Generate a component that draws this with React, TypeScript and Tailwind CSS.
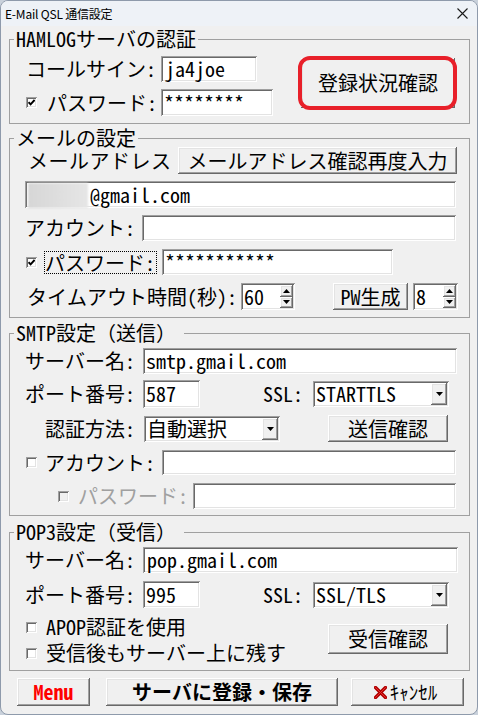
import React from "react";

const RAISED =
  "bg-[#f0f0f0] shadow-[inset_-1px_-1px_0_#696969,inset_1px_1px_0_#ffffff,inset_-2px_-2px_0_#a0a0a0,inset_2px_2px_0_#e3e3e3]";
const SUNKEN =
  "bg-white shadow-[inset_1px_1px_0_#a0a0a0,inset_-1px_-1px_0_#ffffff,inset_2px_2px_0_#696969,inset_-2px_-2px_0_#e3e3e3]";

type Props = { className?: string; children?: React.ReactNode };

function Btn({ className = "", children }: Props) {
  return (
    <button type="button" className={`${RAISED} flex items-center justify-center shrink-0 whitespace-nowrap ${className}`}>
      {children}
    </button>
  );
}

function Field({ className = "", children }: Props) {
  return (
    <div className={`${SUNKEN} flex items-center pl-[3px] shrink-0 whitespace-nowrap ${className}`}>
      {children}
    </div>
  );
}

function Tri({ up = false }: { up?: boolean }) {
  return (
    <svg width="7" height="4" viewBox="0 0 7 4">
      <path d={up ? "M0 4 L3.5 0 L7 4 Z" : "M0 0 L7 0 L3.5 4 Z"} fill="#000" />
    </svg>
  );
}

function Select({ className = "", value }: { className?: string; value: string }) {
  return (
    <Field className={`justify-between pr-[2px] ${className}`}>
      <span>{value}</span>
      <span className={`${RAISED} w-[16px] h-[22px] flex items-center justify-center`}>
        <Tri />
      </span>
    </Field>
  );
}

function Spin({ className = "", value }: { className?: string; value: string }) {
  return (
    <Field className={`justify-between pr-[2px] ${className}`}>
      <span>{value}</span>
      <span className="flex flex-col w-[13px] h-[23px]">
        <span className={`${RAISED} flex-1 flex items-center justify-center`}>
          <Tri up />
        </span>
        <span className={`${RAISED} flex-1 flex items-center justify-center`}>
          <Tri />
        </span>
      </span>
    </Field>
  );
}

function Check({ checked = false, disabled = false, className = "" }: { checked?: boolean; disabled?: boolean; className?: string }) {
  return (
    <span
      className={`w-[11px] h-[11px] shrink-0 flex items-center justify-center ${
        disabled ? "bg-[#f0f0f0]" : "bg-white"
      } shadow-[inset_1px_1px_0_#a0a0a0,inset_-1px_-1px_0_#ffffff,inset_2px_2px_0_#696969,inset_-2px_-2px_0_#e3e3e3] ${className}`}
    >
      {checked && (
        <svg width="7" height="7" viewBox="0 0 7 7">
          <path d="M0.5 3.2 L2.6 5.4 L6.6 1" stroke="#000" strokeWidth="2" fill="none" />
        </svg>
      )}
    </span>
  );
}

function Group({ title, className = "", legendClass = "", children }: Props & { title: string; legendClass?: string }) {
  return (
    <fieldset className={`border border-[#a0a0a0] ${className}`}>
      <legend className={`ml-[4px] px-[2px] h-[18px] leading-[18px] ${legendClass}`}>{title}</legend>
      {children}
    </fieldset>
  );
}

export default function App() {
  return (
    <div className="w-[478px] h-[715px] bg-[#c9d1db]">
      <div className="w-[478px] h-[715px] bg-[#f0f0f0] rounded-[8px] border border-[#8e9aab] overflow-hidden text-black text-[20px] leading-[20px] font-['Noto_Sans_Mono_CJK_JP','Noto_Sans_CJK_JP',monospace]">
        {/* title bar */}
        <div className="h-[25px] bg-[#eef2f7] flex items-center justify-between pl-[4px] pr-[9px]">
          <span className="text-[12px] leading-[14px] font-['Noto_Sans_CJK_JP',sans-serif] tracking-[-0.2px]">
            E-Mail QSL 通信設定
          </span>
          <svg width="11" height="11" viewBox="0 0 11 11">
            <path d="M0.5 0.5 L10.5 10.5 M10.5 0.5 L0.5 10.5" stroke="#1a1a1a" strokeWidth="1.1" />
          </svg>
        </div>

        <div className="pl-[8px] pr-[7px]">
          {/* HAMLOG */}
          <Group title="HAMLOGサーバの認証" className="mt-[4px] pb-[7px]">
            <div className="flex">
              <div className="flex flex-col w-[264px]">
                <div className="flex items-center mt-[8px] h-[26px]">
                  <span className="w-[151px] pl-[16px] whitespace-nowrap">コールサイン:</span>
                  <Field className="w-[96px] h-[26px] pl-[4px]">ja4joe</Field>
                </div>
                <div className="flex items-center mt-[7px] h-[27px]">
                  <Check checked className="ml-[16px]" />
                  <span className="ml-[10px] w-[114px] whitespace-nowrap">パスワード:</span>
                  <Field className="w-[112px] h-[27px]">********</Field>
                </div>
              </div>
              <div className="relative ml-[27px] mt-[10px] w-[154px] h-[50px]">
                <Btn className="w-[154px] h-[50px]">登録状況確認</Btn>
                <span className="absolute -left-[3px] -right-[2px] -top-[2px] -bottom-[2px] rounded-[12px] border-[4px] border-[#e8202a]" />
              </div>
            </div>
          </Group>

          {/* mail */}
          <Group title="メールの設定" className="mt-[5px] pb-[7px]">
            <div className="flex items-center h-[27px]">
              <span className="w-[168px] pl-[18px] tracking-[0.5px] whitespace-nowrap">メールアドレス</span>
              <Btn className="w-[279px] h-[27px]">メールアドレス確認再度入力</Btn>
            </div>
            <div className="flex items-center mt-[7px] h-[27px]">
              <Field className="ml-[15px] w-[431px] h-[27px] pl-[2px]">
                <span className="w-[60px] h-[25px] self-end bg-gradient-to-r from-[#d6d6d6] via-[#dedede] to-[#e6e6e6] blur-[1px]" />
                <span className="ml-[2px]">@gmail.com</span>
              </Field>
            </div>
            <div className="flex items-center mt-[7px] h-[26px]">
              <span className="w-[132px] pl-[15px] whitespace-nowrap">アカウント:</span>
              <Field className="w-[314px] h-[26px]" />
            </div>
            <div className="flex items-center mt-[8px] h-[26px]">
              <Check checked className="ml-[16px]" />
              <span className="ml-[7px] w-[113px] h-[23px] border border-dotted border-black leading-[21px] whitespace-nowrap">
                パスワード:
              </span>
              <Field className="ml-[5px] w-[231px] h-[26px]">***********</Field>
            </div>
            <div className="flex items-center mt-[8px] h-[27px]">
              <span className="w-[231px] pl-[17px] whitespace-nowrap">タイムアウト時間(秒):</span>
              <Spin className="w-[54px] h-[27px]" value="60" />
              <Btn className="ml-[38px] w-[75px] h-[27px]">PW生成</Btn>
              <Spin className="ml-[5px] w-[45px] h-[27px]" value="8" />
            </div>
          </Group>

          {/* SMTP */}
          <Group title="SMTP設定（送信）" legendClass="pr-[8px]" className="mt-[6px] pb-[6px]">
            <div className="flex items-center mt-[6px] h-[26px]">
              <span className="w-[133px] pl-[15px] whitespace-nowrap">サーバー名:</span>
              <Field className="w-[314px] h-[26px] pl-[2px]">smtp.gmail.com</Field>
            </div>
            <div className="flex items-center mt-[6px] h-[28px]">
              <span className="w-[133px] pl-[15px] whitespace-nowrap">ポート番号:</span>
              <Field className="w-[57px] h-[28px] pl-[2px]">587</Field>
              <span className="ml-[63px] w-[50px]">SSL:</span>
              <Select className="w-[136px] h-[26px]" value="STARTTLS" />
            </div>
            <div className="flex items-center mt-[7px] h-[27px]">
              <span className="w-[134px] pl-[35px] whitespace-nowrap">認証方法:</span>
              <Select className="w-[136px] h-[26px]" value="自動選択" />
              <Btn className="ml-[48px] w-[120px] h-[27px]">送信確認</Btn>
            </div>
            <div className="flex items-center mt-[8px] h-[25px]">
              <Check className="ml-[16px]" />
              <span className="ml-[8px] w-[117px] whitespace-nowrap">アカウント:</span>
              <Field className="w-[294px] h-[25px]" />
            </div>
            <div className="flex items-center mt-[8px] h-[26px]">
              <Check disabled className="ml-[48px]" />
              <span className="ml-[9px] w-[115px] text-[#a0a0a0] whitespace-nowrap">パスワード:</span>
              <Field className="w-[263px] h-[26px]" />
            </div>
          </Group>

          {/* POP3 */}
          <Group title="POP3設定（受信）" legendClass="pr-[8px]" className="mt-[7px] pb-[4px]">
            <div className="flex items-center mt-[6px] h-[26px]">
              <span className="w-[133px] pl-[15px] whitespace-nowrap">サーバー名:</span>
              <Field className="w-[315px] h-[26px] pl-[4px]">pop.gmail.com</Field>
            </div>
            <div className="flex items-center mt-[8px] h-[27px]">
              <span className="w-[133px] pl-[15px] whitespace-nowrap">ポート番号:</span>
              <Field className="w-[57px] h-[27px] pl-[2px]">995</Field>
              <span className="ml-[63px] w-[50px]">SSL:</span>
              <Select className="w-[136px] h-[26px]" value="SSL/TLS" />
            </div>
            <div className="flex mt-[6px]">
              <div className="flex flex-col w-[318px]">
                <div className="flex items-center h-[26px]">
                  <Check className="ml-[16px]" />
                  <span className="ml-[9px] whitespace-nowrap">APOP認証を使用</span>
                </div>
                <div className="flex items-center h-[26px]">
                  <Check className="ml-[16px]" />
                  <span className="ml-[9px] whitespace-nowrap">受信後もサーバー上に残す</span>
                </div>
              </div>
              <Btn className="mt-[10px] w-[120px] h-[30px]">受信確認</Btn>
            </div>
          </Group>

          {/* bottom buttons */}
          <div className="flex items-center mt-[7px] h-[28px]">
            <Btn className="ml-[8px] w-[73px] h-[28px] text-[#ff0000] font-bold">Menu</Btn>
            <Btn className="ml-[16px] w-[232px] h-[28px] font-bold">サーバに登録・保存</Btn>
            <Btn className="ml-[13px] w-[113px] h-[28px] gap-[3px] pr-[4px]">
              <svg width="13" height="13" viewBox="0 0 13 13">
                <path d="M1.5 1.5 L11.5 11.5 M11.5 1.5 L1.5 11.5" stroke="#b00000" strokeWidth="3.4" strokeLinecap="round" />
                <path d="M1.5 1.5 L11.5 11.5 M11.5 1.5 L1.5 11.5" stroke="#e83030" strokeWidth="1" strokeLinecap="round" />
              </svg>
              <span className="text-[19px] leading-[20px] font-['Noto_Sans_CJK_JP',sans-serif]">ｷｬﾝｾﾙ</span>
            </Btn>
          </div>
        </div>
      </div>
    </div>
  );
}
